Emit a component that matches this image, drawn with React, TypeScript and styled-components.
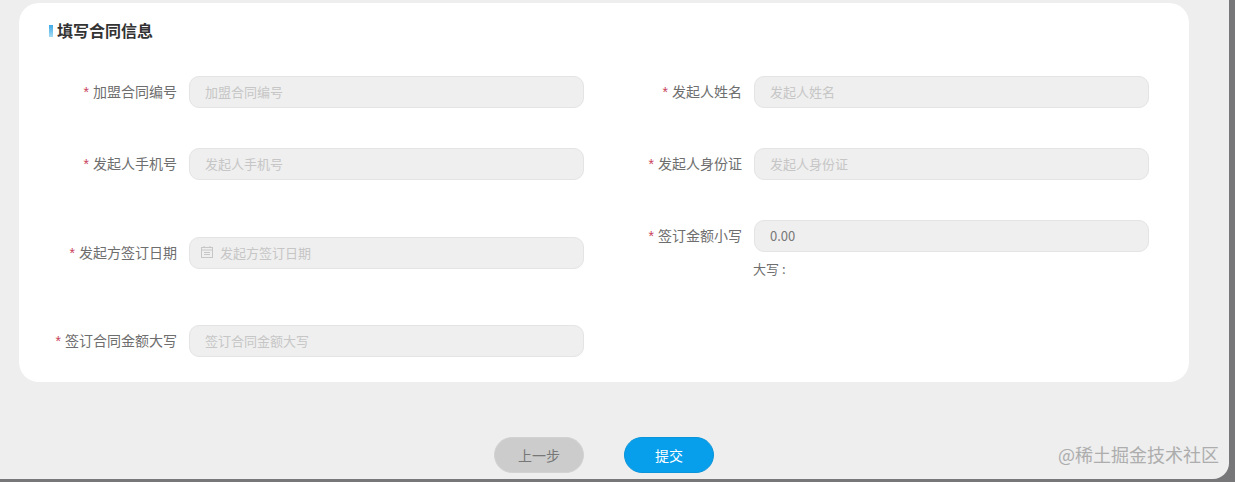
import { createGlobalStyle } from 'styled-components';
import styled from 'styled-components';

const GlobalStyle = createGlobalStyle`
  html, body {
    margin: 0;
    padding: 0;
    height: 482px;
    overflow: hidden;
    background: #77777a;
    font-family: "Noto Sans CJK SC", "Liberation Sans", sans-serif;
  }
`;

const Shell = styled.div`
  width: 1229px;
  height: 479px;
  box-sizing: border-box;
  padding: 3px 0 0 19px;
  background: #eeeeee;
  border-bottom-right-radius: 16px;
  position: relative;
`;

const Card = styled.section`
  width: 1170px;
  height: 379px;
  box-sizing: border-box;
  padding: 17px 40px 0 30px;
  background: #ffffff;
  border-radius: 20px;
`;

const Title = styled.h2`
  display: flex;
  align-items: center;
  gap: 4px;
  height: 20px;
  margin: 0 0 36px;
  font-size: 16px;
  font-weight: 700;
  line-height: 20px;
  color: #333333;
`;

const TitleMark = styled.i`
  display: block;
  width: 4px;
  height: 12px;
  margin-top: 2px;
  background: linear-gradient(180deg, #3fa9e6, #a4dcf3);
`;

const Columns = styled.div`
  display: flex;
  gap: 30px;
`;

const Column = styled.div`
  display: flex;
  flex-direction: column;
  width: 535px;
`;

const Field = styled.div<{ $top?: number }>`
  display: flex;
  align-items: flex-start;
  gap: 12px;
  margin-top: ${p => p.$top ?? 0}px;
`;

const Label = styled.label`
  width: 128px;
  height: 32px;
  font-size: 14px;
  line-height: 31px;
  color: #6e6e6e;
  text-align: right;
  white-space: nowrap;
`;

const Star = styled.span`
  margin-right: 4px;
  font-family: "Liberation Sans", sans-serif;
  color: #c9415c;
`;

const InputBox = styled.div`
  display: flex;
  align-items: center;
  gap: 7px;
  width: 395px;
  height: 32px;
  box-sizing: border-box;
  padding: 0 15px 2px 11px;
  background: #efefef;
  border: 1px solid #e4e4e4;
  border-radius: 10px;
`;

const InputText = styled.span<{ $filled?: boolean; $indent?: boolean }>`
  padding-left: ${p => (p.$indent ? 4 : 0)}px;
  font-size: 13px;
  color: ${p => (p.$filled ? '#777777' : '#c6c6c6')};
`;

const Note = styled.div`
  margin: 6px 0 0 139px;
  font-size: 13px;
  line-height: 22px;
  color: #6e6e6e;
  white-space: pre;
`;

const Actions = styled.div`
  display: flex;
  justify-content: center;
  gap: 40px;
  width: 1170px;
  margin-top: 55px;
`;

const Pill = styled.button<{ $primary?: boolean }>`
  width: 90px;
  height: 36px;
  padding: 0;
  font-family: inherit;
  font-size: 14px;
  color: ${p => (p.$primary ? '#ffffff' : '#777777')};
  background: ${p => (p.$primary ? '#079fec' : '#cccccc')};
  border: 1px solid ${p => (p.$primary ? '#0a94da' : '#d2d2d2')};
  border-radius: 18px;
`;

const Watermark = styled.div`
  position: absolute;
  right: 10px;
  bottom: 13px;
  font-size: 18px;
  line-height: 24px;
  color: #adadad;
`;

const CalendarIcon = () => (
  <svg width="12" height="12" viewBox="0 0 12 12" fill="none" stroke="#c6c6c6" strokeWidth="1">
    <rect x="0.5" y="1.5" width="11" height="10" />
    <path d="M.5 4h11M3 6.5h6M3 8.5h6M3 0v2M9 0v2" />
  </svg>
);

type FieldProps = { label: string; top?: number; value?: string; calendar?: boolean };

const FormField = ({ label, top, value, calendar }: FieldProps) => (
  <Field $top={top}>
    <Label>
      <Star>*</Star>
      {label}
    </Label>
    <InputBox>
      {calendar && <CalendarIcon />}
      <InputText $filled={!!value} $indent={!calendar}>
        {value ?? label}
      </InputText>
    </InputBox>
  </Field>
);

export default function App() {
  return (
    <>
      <GlobalStyle />
      <Shell>
        <Card>
          <Title>
            <TitleMark />
            填写合同信息
          </Title>
          <Columns>
            <Column>
              <FormField label="加盟合同编号" />
              <FormField label="发起人手机号" top={40} />
              <FormField label="发起方签订日期" top={57} calendar />
              <FormField label="签订合同金额大写" top={56} />
            </Column>
            <Column>
              <FormField label="发起人姓名" />
              <FormField label="发起人身份证" top={40} />
              <FormField label="签订金额小写" top={40} value="0.00" />
              <Note>大写 :</Note>
            </Column>
          </Columns>
        </Card>
        <Actions>
          <Pill>上一步</Pill>
          <Pill $primary>提交</Pill>
        </Actions>
        <Watermark>@稀土掘金技术社区</Watermark>
      </Shell>
    </>
  );
}
